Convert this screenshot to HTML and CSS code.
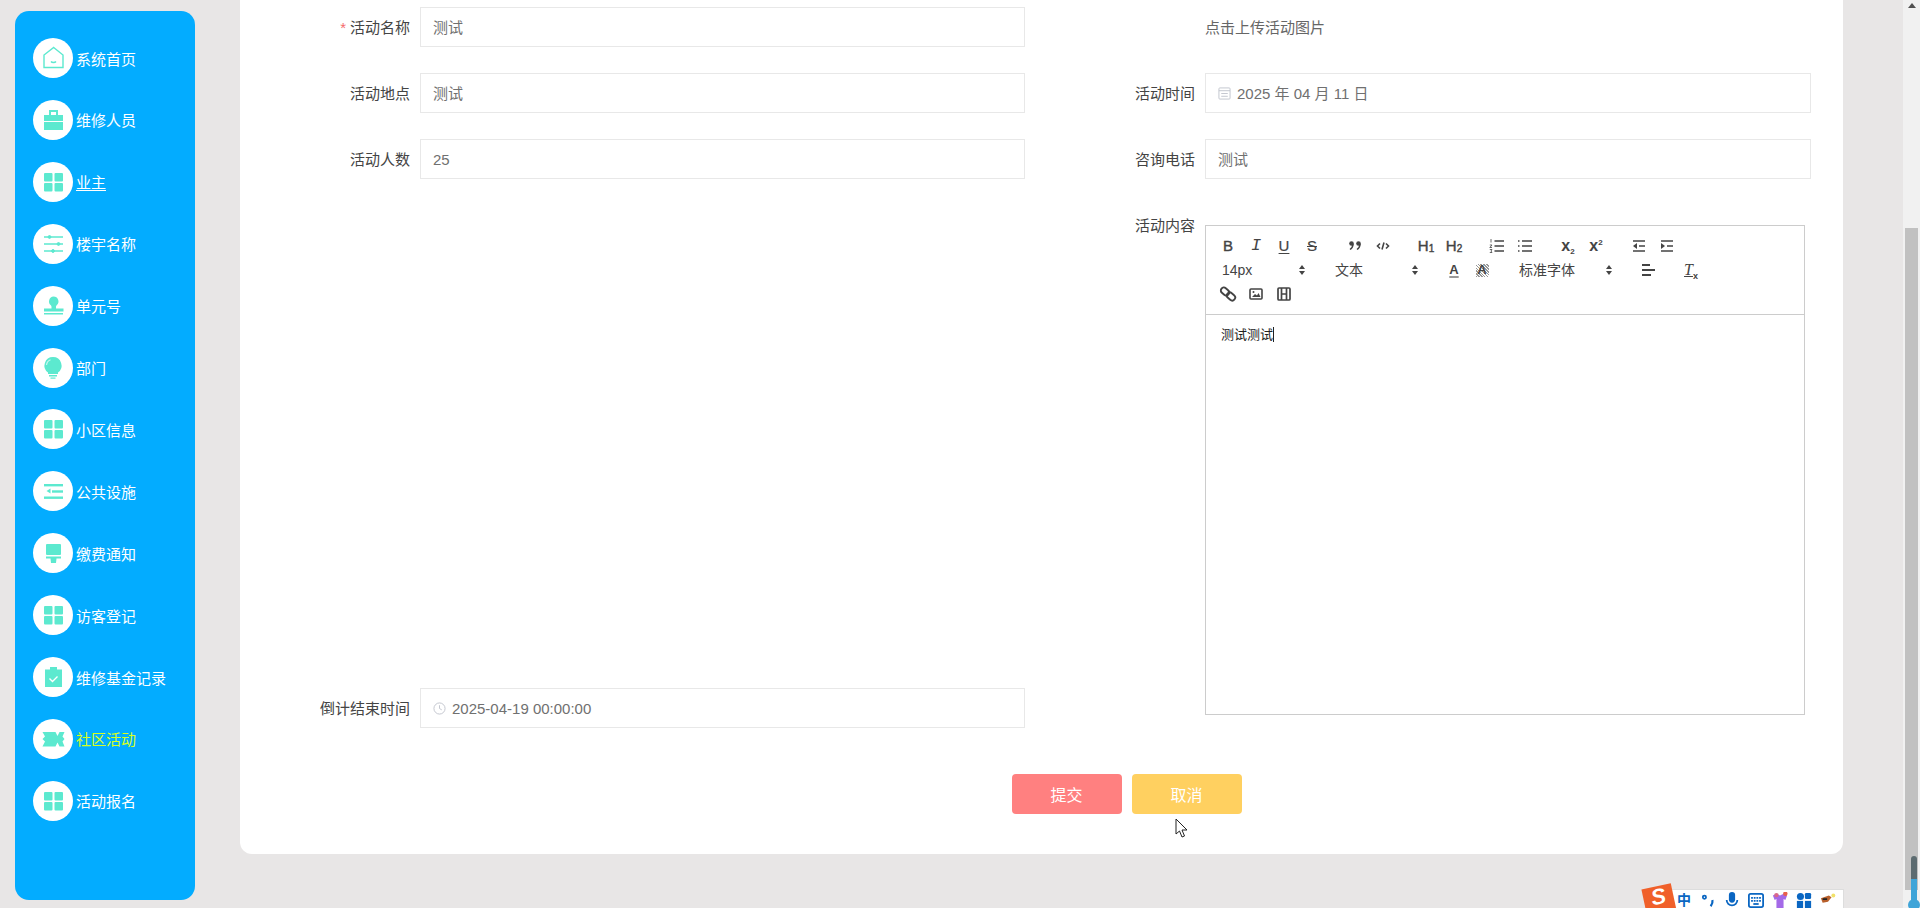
FILE: index.html
```html
<!DOCTYPE html>
<html lang="zh-CN">
<head>
  <meta charset="UTF-8" />
  <title>社区活动</title>
  <link rel="stylesheet" href="styles.css">
</head>
<body>
  <div class="layout">
    <nav class="sidebar">
      <a class="nav-item"><span class="nav-icon"><svg viewBox="0 0 24 24" fill="none" stroke="currentColor" stroke-width="1.4"><path d="M12.700 1.500 22 9v12.500H3V9z"/><path d="M10 15.500c1 1.300 4 1.300 5 0"/></svg></span>系统首页</a>
      <a class="nav-item"><span class="nav-icon"><svg viewBox="0 0 24 24" fill="currentColor"><path d="M8 7V2h9v5h5v15H3V7zm2 0h5V4h-5z"/><path d="M3 13.500h19" stroke="#fff"/></svg></span>维修人员</a>
      <a class="nav-item"><span class="nav-icon"><svg viewBox="0 0 24 24" fill="currentColor"><rect x="3" y="3" width="8.500" height="8.500" rx="1"/><rect x="13.500" y="3" width="8.500" height="8.500" rx="1"/><rect x="3" y="13" width="8.500" height="8.500" rx="1"/><rect x="13.500" y="13" width="8.500" height="8.500" rx="1"/></svg></span><span class="underlined">业主</span></a>
      <a class="nav-item"><span class="nav-icon"><svg viewBox="0 0 24 24" fill="currentColor" stroke="currentColor"><path d="M3 5h19M3 12h19M3 19h19" stroke-width="1.500"/><circle cx="8.500" cy="5" r="1.400"/><circle cx="17.500" cy="12" r="1.400"/><circle cx="12" cy="19" r="1.400"/></svg></span>楼宇名称</a>
      <a class="nav-item"><span class="nav-icon"><svg viewBox="0 0 24 24" fill="currentColor"><path d="M12.500 2.500a5 5 0 0 1 3.200 8.800c-.6.500-.7 1-.7 1.700v1.500h7.500v3H3v-3h7.500V13c0-.7-.1-1.200-.7-1.700a5 5 0 0 1 2.700-8.800z"/><rect x="3" y="19" width="19" height="1.500"/></svg></span>单元号</a>
      <a class="nav-item"><span class="nav-icon"><svg viewBox="0 0 24 24" fill="currentColor"><path d="M12 1a8.500 8.500 0 0 1 5 15.400V18H7v-1.600A8.500 8.500 0 0 1 12 1z"/><rect x="8" y="19" width="8" height="1.500"/><rect x="9.500" y="21.500" width="5" height="1.200"/><path d="M5.500 9A6.500 6.500 0 0 1 9.500 3.800" fill="none" stroke="#c8f7ee" stroke-width="1.200"/></svg></span>部门</a>
      <a class="nav-item"><span class="nav-icon"><svg viewBox="0 0 24 24" fill="currentColor"><rect x="3" y="3" width="8.500" height="8.500" rx="1"/><rect x="13.500" y="3" width="8.500" height="8.500" rx="1"/><rect x="3" y="13" width="8.500" height="8.500" rx="1"/><rect x="13.500" y="13" width="8.500" height="8.500" rx="1"/></svg></span>小区信息</a>
      <a class="nav-item"><span class="nav-icon"><svg viewBox="0 0 24 24" fill="currentColor"><rect x="3" y="5" width="19" height="2.400"/><rect x="11" y="11.300" width="11" height="2.400"/><rect x="3" y="17.500" width="19" height="2.400"/><path d="M9.500 9.500v5L5.500 12z"/></svg></span>公共设施</a>
      <a class="nav-item"><span class="nav-icon"><svg viewBox="0 0 24 24" fill="currentColor"><rect x="5" y="3" width="15" height="11" rx="1"/><path d="M5 15.500h15v2h-4.500l-.5 4.500h-5l-.5-4.500H5z"/></svg></span>缴费通知</a>
      <a class="nav-item"><span class="nav-icon"><svg viewBox="0 0 24 24" fill="currentColor"><rect x="3" y="3" width="8.500" height="8.500" rx="1"/><rect x="13.500" y="3" width="8.500" height="8.500" rx="1"/><rect x="3" y="13" width="8.500" height="8.500" rx="1"/><rect x="13.500" y="13" width="8.500" height="8.500" rx="1"/></svg></span>访客登记</a>
      <a class="nav-item"><span class="nav-icon"><svg viewBox="0 0 24 24" fill="currentColor"><path d="M4 4.500h5V2h7v2.500h5V22H4z"/><path d="M8.500 13.500l3 3 5-5" fill="none" stroke="#fff" stroke-width="1.400"/></svg></span>维修基金记录</a>
      <a class="nav-item active"><span class="nav-icon"><svg viewBox="0 0 24 24" fill="currentColor"><path d="M1.500 5h13l2 4 2-4h5l-2 4.500 2 2.500-2 2.500 2 5h-5l-2-4-2 4h-13l2.500-5-2.500-2.500 2.500-2.500z"/></svg></span>社区活动</a>
      <a class="nav-item"><span class="nav-icon"><svg viewBox="0 0 24 24" fill="currentColor"><rect x="3" y="3" width="8.500" height="8.500" rx="1"/><rect x="13.500" y="3" width="8.500" height="8.500" rx="1"/><rect x="3" y="13" width="8.500" height="8.500" rx="1"/><rect x="13.500" y="13" width="8.500" height="8.500" rx="1"/></svg></span>活动报名</a>
    </nav>

    <main class="card">
      <form class="form">
        <div class="col">
          <div class="field"><label class="field-label"><i class="req">*</i>活动名称</label><div class="input">测试</div></div>
          <div class="field"><label class="field-label">活动地点</label><div class="input">测试</div></div>
          <div class="field"><label class="field-label">活动人数</label><div class="input">25</div></div>
          <div class="field field-end"><label class="field-label">倒计结束时间</label>
            <div class="input input-icon"><svg class="field-icon" viewBox="0 0 14 14" fill="none" stroke="#c0c4cc"><circle cx="7" cy="7" r="6"/><path d="M7 3.500V7l2.500 1.500"/></svg>2025-04-19 00:00:00</div>
          </div>
        </div>
        <div class="col">
          <div class="field"><label class="field-label"></label><div class="upload">点击上传活动图片</div></div>
          <div class="field"><label class="field-label">活动时间</label>
            <div class="input input-icon"><svg class="field-icon" viewBox="0 0 14 14" fill="none" stroke="#c0c4cc"><rect x="1" y="1" width="12" height="12" rx="1"/><path d="M1 4h12M3.500 7h7M3.500 10h7"/></svg>2025 年 04 月 11 日</div>
          </div>
          <div class="field"><label class="field-label">咨询电话</label><div class="input">测试</div></div>
          <div class="field field-editor"><label class="field-label">活动内容</label>
            <div class="editor">
              <div class="toolbar">
                <div class="tool-row">
                  <span class="group">
                    <span class="tool t-b">B</span><span class="tool t-i">I</span><span class="tool t-u">U</span><span class="tool t-s">S</span>
                  </span>
                  <span class="group">
                    <span class="tool"><svg viewBox="0 0 18 18" fill="#444" stroke="#444"><circle cx="5.500" cy="6.500" r="2.300" stroke="none"/><circle cx="12.500" cy="6.500" r="2.300" stroke="none"/><path d="M7 7c0 3-1.500 4.500-3 5.500M14 7c0 3-1.500 4.500-3 5.500" fill="none" stroke-width="1.500"/></svg></span>
                    <span class="tool"><svg viewBox="0 0 18 18" fill="none" stroke="#444" stroke-width="1.600"><path d="M6 6.500 3.500 9 6 11.500M12 6.500 14.500 9 12 11.500M10 5.500 8 12.500"/></svg></span>
                  </span>
                  <span class="group">
                    <span class="tool t-h">H<sub>1</sub></span><span class="tool t-h">H<sub>2</sub></span>
                  </span>
                  <span class="group">
                    <span class="tool"><svg viewBox="0 0 18 18" fill="none" stroke="#444" stroke-width="1.500"><path d="M6.500 4H16M6.500 9H16M6.500 14H16"/><path d="M3 2v3.500M1.800 8H4L1.800 10.500H4M1.800 12.500H4L3 14l1 1.500H1.800" stroke-width=".8"/></svg></span>
                    <span class="tool"><svg viewBox="0 0 18 18" fill="none" stroke="#444" stroke-width="1.500"><path d="M6 4h10M6 9h10M6 14h10M2 4h1.500M2 9h1.500M2 14h1.500"/></svg></span>
                  </span>
                  <span class="group">
                    <span class="tool t-x">x<sub>2</sub></span><span class="tool t-x">x<sup>2</sup></span>
                  </span>
                  <span class="group">
                    <span class="tool"><svg viewBox="0 0 18 18" fill="#444" stroke="#444" stroke-width="1.500"><path d="M3 4h12M9 9h6M3 14h12" fill="none"/><path d="M7 6v6L3 9z" stroke="none"/></svg></span>
                    <span class="tool"><svg viewBox="0 0 18 18" fill="#444" stroke="#444" stroke-width="1.500"><path d="M3 4h12M9 9h6M3 14h12" fill="none"/><path d="M3 6v6l4-3z" stroke="none"/></svg></span>
                  </span>
                </div>
                <div class="tool-row">
                  <span class="group"><span class="picker">14px<i class="updown"></i></span></span>
                  <span class="group"><span class="picker">文本<i class="updown"></i></span></span>
                  <span class="group">
                    <span class="tool t-a">A</span><span class="tool t-a t-a-bg">A</span>
                  </span>
                  <span class="group"><span class="picker picker-font">标准字体<i class="updown"></i></span></span>
                  <span class="group">
                    <span class="tool"><svg viewBox="0 0 18 18" fill="none" stroke="#444" stroke-width="1.800"><path d="M3 4h8M3 9h13M3 14h9"/></svg></span>
                  </span>
                  <span class="group"><span class="tool t-clear">T<sub>x</sub></span></span>
                </div>
                <div class="tool-row">
                  <span class="group">
                    <span class="tool"><svg viewBox="0 0 18 18" fill="none" stroke="#444" stroke-width="1.900"><rect x="1.500" y="3.500" width="9" height="6" rx="3" transform="rotate(40 6 6.500)"/><rect x="7.500" y="8.500" width="9" height="6" rx="3" transform="rotate(40 12 11.500)"/></svg></span>
                    <span class="tool"><svg viewBox="0 0 18 18" fill="#444" stroke="#444"><rect x="3" y="4" width="12" height="10" rx="1" fill="none" stroke-width="1.600"/><path d="M5 12l3-3 2 1.500 1.500-2.500 2 4z" stroke="none"/><circle cx="6.500" cy="7" r="1" stroke="none"/></svg></span>
                    <span class="tool"><svg viewBox="0 0 18 18" fill="none" stroke="#444" stroke-width="1.700"><rect x="3" y="3" width="12" height="12" rx="1"/><path d="M6.500 3v12M11.500 3v12M6.500 9h5"/></svg></span>
                  </span>
                </div>
              </div>
              <div class="editor-body"><span class="caret-text">测试测试</span></div>
            </div>
          </div>
        </div>
      </form>
      <div class="actions">
        <button class="btn btn-submit" type="button">提交</button>
        <button class="btn btn-cancel" type="button">取消</button>
      </div>
    </main>

    <div class="scrollbar"><div class="scroll-arrow"></div><div class="thumb"></div></div>
  </div>

  <!-- things lying over the page -->
  <svg class="cursor" viewBox="0 0 13 20"><path d="M1 1v15l3.500-3 2.500 6 2.500-1-2.500-6H12z" fill="#fff" stroke="#222" stroke-width="1"/></svg>

  <div class="ime">
    <span class="ime-logo"><span class="ime-s">S</span></span>
    <span class="ime-slot ime-cn">中</span>
    <span class="ime-slot"><svg viewBox="0 0 18 18" fill="none" stroke="#0a66c2" stroke-width="2"><circle cx="5" cy="6" r="1.800"/><path d="M14 9c.6 3-.5 5-2 7" stroke-width="2.500"/></svg></span>
    <span class="ime-slot"><svg viewBox="0 0 18 18" fill="#0a66c2"><rect x="5.500" y="0" width="7" height="12" rx="3.500"/><path d="M2 9a7 7 0 0 0 14 0h-2a5 5 0 0 1-10 0z"/></svg></span>
    <span class="ime-slot"><svg viewBox="0 0 18 18" fill="none" stroke="#0a66c2" stroke-width="2"><rect x="1" y="2" width="16" height="15" rx="2"/><path d="M3.500 6.500h11M3.500 10h11" stroke-dasharray="2 1"/><path d="M6 13.500h6"/></svg></span>
    <span class="ime-slot"><svg viewBox="0 0 18 18"><path d="M1 4l4-2 4 2 4-2 4 2-2 5-2-1v10H5V8L3 9z" fill="#a46ae8"/><circle cx="5" cy="3.500" r="2.500" fill="#d9688a"/><circle cx="15" cy="2" r="2.500" fill="#e8604c"/></svg></span>
    <span class="ime-slot"><svg viewBox="0 0 18 18" fill="#0a66c2"><circle cx="5" cy="5" r="4"/><rect x="10" y="1" width="7" height="7" rx="1.500"/><rect x="1" y="10" width="7" height="8"/><rect x="10" y="10" width="7" height="8"/></svg></span>
    <span class="ime-slot"><svg viewBox="0 0 18 18"><path d="M1 7l9-3 3 2-4 5-6 1z" fill="#b8602c"/><path d="M3 8h5" stroke="#222" stroke-width="2"/><circle cx="15" cy="4" r="2.200" fill="#f2e26a"/></svg></span>
  </div>

  <div class="thermo"><span class="thermo-fill"></span><span class="thermo-bulb"></span></div>
</body>
</html>
```

FILE: styles.css
```css
* {
  box-sizing: border-box;
}

html,
body {
  margin: 0;
  height: 100%;
  overflow: hidden;
}

body {
  background: #e8e6e6;
  font-family: "Liberation Sans", "Noto Sans CJK SC", sans-serif;
  font-size: 15px;
  color: #555;
}

.layout {
  display: flex;
  height: 908px;
}

/* sidebar */
.sidebar {
  width: 180px;
  height: 889px;
  margin: 11px 0 0 15px;
  padding: 27px 0 0 18px;
  flex-shrink: 0;
  background: #03acff;
  border-radius: 14px;
}

.nav-item {
  display: flex;
  align-items: center;
  height: 40px;
  margin-bottom: 21.92px;
  color: #fff;
}

.nav-item.active {
  color: #d8ff1e;
}

.underlined {
  text-decoration: underline;
  text-underline-offset: 2px;
}

.nav-icon {
  display: flex;
  justify-content: center;
  align-items: center;
  width: 40px;
  height: 40px;
  margin-right: 3px;
  border-radius: 50%;
  background: #fff;
  color: #5ce9cf;
}

.nav-icon svg {
  width: 24px;
  height: 24px;
}

/* main card */
.card {
  width: 1603px;
  height: 854px;
  margin-left: 45px;
  background: #fff;
  border-radius: 0 0 12px 12px;
}

.form {
  display: flex;
  padding-top: 7px;
}

.col {
  display: flex;
  flex-direction: column;
}

.col:first-child {
  width: 785px;
}

.field {
  display: flex;
  align-items: flex-start;
  margin-bottom: 26px;
}

.field-end {
  margin-top: auto;
  margin-bottom: 0;
}

.field-editor {
  margin-bottom: 0;
  height: 523px;
}

.field-label {
  width: 180px;
  height: 40px;
  padding-right: 10px;
  line-height: 41px;
  text-align: right;
  color: #444;
  flex-shrink: 0;
}

.req {
  margin-right: 4px;
  font-style: normal;
  color: #f56c6c;
}

.input {
  width: 605px;
  height: 40px;
  padding: 0 12px;
  line-height: 39px;
  border: 1px solid #e8e8e8;
  background: #fff;
  color: #707070;
}

.col:last-child .input {
  width: 606px;
}

.input-icon {
  display: flex;
  align-items: center;
}

.field-icon {
  width: 13px;
  height: 13px;
  margin-right: 6px;
  flex-shrink: 0;
}

.upload {
  height: 40px;
  line-height: 41px;
  color: #666;
}

/* editor */
.editor {
  width: 600px;
  height: 490px;
  margin-top: 20px;
  border: 1px solid #ccc;
}

.toolbar {
  height: 89px;
  padding: 8px;
  border-bottom: 1px solid #ccc;
}

.tool-row {
  display: flex;
  height: 24px;
}

.group {
  display: flex;
  margin-right: 15px;
}

.tool {
  display: block;
  width: 28px;
  height: 24px;
  padding: 3px 0;
  color: #444;
  font-size: 15px;
  line-height: 18px;
  text-align: center;
  white-space: nowrap;
}

.tool svg {
  display: block;
  width: 18px;
  height: 18px;
  margin: 0 auto;
}

.tool sub,
.tool sup {
  font-size: 8px;
  line-height: 0;
}

.t-b,
.t-h {
  -webkit-text-stroke: 0.4px #444;
}

.t-i {
  font-family: "Liberation Mono", monospace;
  font-style: italic;
  font-size: 17px;
}

.t-u {
  text-decoration: underline;
  text-underline-offset: 2px;
  -webkit-text-stroke: 0.2px #444;
}

.t-s {
  text-decoration: line-through;
  -webkit-text-stroke: 0.2px #444;
}

.t-h sub {
  font-size: 10px;
  vertical-align: -1px;
}

.t-x {
  font-weight: bold;
  font-size: 16px;
}

.t-x sub {
  vertical-align: -3px;
}

.t-x sup {
  vertical-align: 6px;
}

.t-a {
  font-weight: bold;
  font-size: 13px;
}

.t-a:not(.t-a-bg) {
  text-decoration: underline;
  text-decoration-color: #999;
  text-decoration-thickness: 2px;
  text-underline-offset: 2px;
}

.t-a-bg {
  background: repeating-linear-gradient(45deg, #999 0 1px, #fff 1px 2px) center / 13px 13px no-repeat;
}

.t-clear {
  font-family: "Liberation Serif", serif;
  font-style: italic;
  font-size: 16px;
  text-decoration: underline;
}

.t-clear sub {
  font-family: "Liberation Sans", sans-serif;
  font-style: normal;
  font-weight: bold;
  font-size: 9px;
}

.picker {
  position: relative;
  display: block;
  width: 98px;
  height: 24px;
  padding-left: 8px;
  line-height: 24px;
  font-size: 14px;
  color: #444;
}

.picker-font {
  width: 108px;
}

/* little up and down arrows of the select */
.updown {
  position: absolute;
  top: 7px;
  right: 7px;
  width: 6px;
  height: 10px;
}

.updown::before,
.updown::after {
  content: "";
  position: absolute;
  left: 0;
  border-left: 3px solid transparent;
  border-right: 3px solid transparent;
}

.updown::before {
  top: 0;
  border-bottom: 4px solid #444;
}

.updown::after {
  bottom: 0;
  border-top: 4px solid #444;
}

.editor-body {
  padding: 10px 15px;
  font-size: 13px;
  line-height: 19px;
  color: #222;
}

.caret-text {
  border-right: 1px solid #222;
}

/* buttons */
.actions {
  display: flex;
  justify-content: center;
  gap: 10px;
  margin-top: 46px;
  padding-left: 170px;
}

.btn {
  width: 110px;
  height: 40px;
  border: none;
  border-radius: 4px;
  color: #fff;
  font-family: inherit;
  font-size: 16px;
}

.btn-submit {
  background: #ff8080;
}

.btn-cancel {
  background: #ffd060;
}

/* scrollbar */
.scrollbar {
  position: relative;
  width: 17px;
  height: 908px;
  margin-left: auto;
  padding: 228px 2px 0;
  background: #f1f1f1;
}

.scroll-arrow {
  position: absolute;
  left: 5px;
  top: 3px;
  border-left: 4px solid transparent;
  border-right: 4px solid transparent;
  border-bottom: 5px solid #505050;
}

.thumb {
  height: 662px;
  background: #c1c1c1;
}

/* over the page */
.cursor {
  position: absolute;
  left: 1175px;
  top: 818px;
  width: 13px;
  height: 20px;
}

.ime {
  position: absolute;
  left: 1672px;
  top: 889px;
  width: 172px;
  height: 19px;
  display: flex;
  background: #fff;
  border-top: 1px solid #ddd;
  border-right: 1px solid #ddd;
}

.ime-logo {
  position: absolute;
  left: -28px;
  top: -4px;
  width: 30px;
  height: 28px;
  background: #f0602a;
  overflow: hidden;
  transform: rotate(-12deg);
}

.ime-s {
  display: block;
  color: #fff;
  font-size: 22px;
  font-weight: bold;
  font-style: italic;
  line-height: 22px;
  text-align: center;
}

.ime-slot {
  width: 24px;
  height: 18px;
  padding-top: 2px;
  text-align: center;
}

.ime-slot svg {
  display: block;
  width: 16px;
  height: 16px;
  margin: 0 auto;
}

.ime-cn {
  color: #0a66c2;
  font-weight: bold;
  font-size: 14px;
  line-height: 16px;
}

.thermo {
  position: absolute;
  left: 1911px;
  top: 856px;
  width: 6px;
  height: 52px;
  border-radius: 3px 3px 0 0;
  background: #5c6b70;
}

.thermo-fill {
  position: absolute;
  left: 0;
  top: 23px;
  width: 6px;
  height: 29px;
  background: #3fa4d8;
}

.thermo-bulb {
  position: absolute;
  left: -3px;
  top: 43px;
  width: 12px;
  height: 12px;
  border-radius: 50%;
  background: #3fa4d8;
}
```
